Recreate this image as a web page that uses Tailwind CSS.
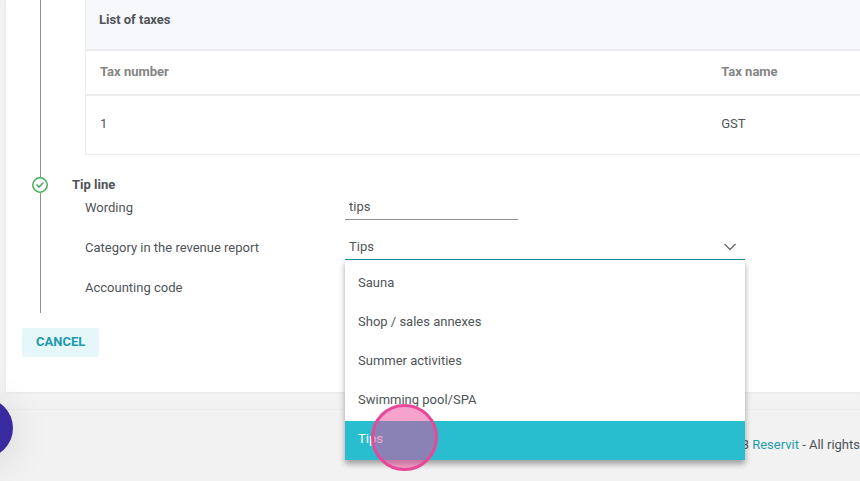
<!DOCTYPE html>
<html lang="en">
<head>
    <meta charset="UTF-8">
    <meta name="viewport" content="width=device-width, initial-scale=1.0">
    <title>Reservit - Taxes</title>
    <script src="https://cdn.jsdelivr.net/npm/@tailwindcss/browser@4"></script>
</head>
<body class="relative min-h-screen overflow-hidden bg-[#f2f2f2] font-[Roboto,sans-serif] text-[13px] leading-4 text-[#4f5459]">
    <main class="ml-1.5 bg-white pb-[35px] shadow-[0_0_3px_rgba(0,0,0,0.08)]">
        <!-- Taxes step -->
        <section class="flex pl-[26px]">
            <div class="flex w-4 shrink-0 justify-center">
                <div class="w-px bg-[#8f8f8f]"></div>
            </div>
            <div class="min-w-0 flex-1 pb-[22px] pl-[37px]">
                <div class="border-l border-[#ebecee]">
                    <h2 class="h-[49px] bg-[#f7f8fb] pt-3 pl-[13px] font-bold">List of taxes</h2>
                    <table class="w-full border-b border-[#ebecee] text-left">
                        <thead>
                            <tr class="h-[45px] border-y-2 border-[#ececee] text-[#858585]">
                                <th class="w-4/5 pb-0.5 pl-3.5 font-bold">Tax number</th>
                                <th class="pb-0.5 pl-4 font-bold">Tax name</th>
                            </tr>
                        </thead>
                        <tbody>
                            <tr class="h-[59px]">
                                <td class="pb-0.5 pl-3.5">1</td>
                                <td class="pb-0.5 pl-4">GST</td>
                            </tr>
                        </tbody>
                    </table>
                </div>
            </div>
        </section>

        <!-- Tip line step -->
        <section class="flex pl-[26px]">
            <div class="flex w-4 shrink-0 flex-col items-center">
                <svg class="size-4 shrink-0" viewBox="0 0 16 16" fill="none" stroke="#43ab57" stroke-width="1.5" stroke-linecap="round" stroke-linejoin="round">
                    <circle cx="8" cy="8" r="7.2"/>
                    <path d="M5 8.1 7.1 10.1 11 6.1"/>
                </svg>
                <div class="w-px flex-1 bg-[#8f8f8f]"></div>
            </div>
            <div class="min-w-0 flex-1 pb-2.5 pl-6">
                <h2 class="font-bold">Tip line</h2>
                <div class="grid grid-cols-[260px_1fr] items-start gap-y-2.5 pl-[13px]">
                    <label for="wording" class="flex h-[30px] items-center">Wording</label>
                    <input type="text" id="wording" value="tips" class="h-[27px] w-[173px] border-b border-[#8f8f8f] px-1 pt-0.5 outline-none">

                    <label for="category" class="flex h-[30px] items-center">Category in the revenue report</label>
                    <div class="relative h-[27px] w-[400px]">
                        <select id="category" class="h-[26px] w-full appearance-none px-1 pt-0.5 outline-none">
                            <option>Sauna</option>
                            <option>Shop / sales annexes</option>
                            <option>Summer activities</option>
                            <option>Swimming pool/SPA</option>
                            <option selected>Tips</option>
                        </select>
                        <svg class="pointer-events-none absolute top-2.5 right-2 h-2 w-3.5" viewBox="0 0 14 8" fill="none" stroke="#6b6f76" stroke-width="1.5">
                            <path d="M1.5 1 7 6.5 12.5 1"/>
                        </svg>
                        <ul role="listbox" aria-label="Category in the revenue report" class="absolute top-[26px] left-0 z-10 w-full border-t border-[#16899a] bg-white pt-[5px] shadow-[0_4px_6px_rgba(0,0,0,0.35)]">
                            <li role="option" class="flex h-[39px] items-center px-[13px] pb-0.5">Sauna</li>
                            <li role="option" class="flex h-[39px] items-center px-[13px] pb-0.5">Shop / sales annexes</li>
                            <li role="option" class="flex h-[39px] items-center px-[13px] pb-0.5">Summer activities</li>
                            <li role="option" class="flex h-[39px] items-center px-[13px] pb-0.5">Swimming pool/SPA</li>
                            <li role="option" aria-selected="true" class="flex h-[39px] items-center bg-[#29bdd0] px-[13px] pb-0.5 text-white">Tips</li>
                        </ul>
                    </div>

                    <label for="accounting" class="flex h-[30px] items-center">Accounting code</label>
                    <input type="text" id="accounting" class="h-[27px] w-[173px] border-b border-[#8f8f8f] px-1 pt-0.5 outline-none">
                </div>
            </div>
        </section>

        <button type="button" class="mt-[15px] ml-4 h-[29px] rounded-xs bg-[#e5f7f9] px-3.5 pb-px font-bold text-[#1e9aac]">CANCEL</button>
    </main>

    <footer class="mt-[17px] flex justify-end border-t border-[#ebebeb] pt-[27px]">
        <p class="whitespace-nowrap">3 <a href="#" class="text-[#1e9aac]">Reservit</a> - All rights</p>
    </footer>

    <!-- Chat bubble -->
    <button type="button" aria-label="Open chat" class="absolute top-[398px] -left-[47px] size-[60px] rounded-full bg-[#3a2a9f] shadow-[0_6px_40px_rgba(0,0,0,0.12)]"></button>

    <!-- Click marker -->
    <div class="pointer-events-none absolute top-[404px] left-[371px] z-20 size-[67px] rounded-full border-3 border-[#e8489a] bg-[#ec4899]/50"></div>
</body>
</html>
